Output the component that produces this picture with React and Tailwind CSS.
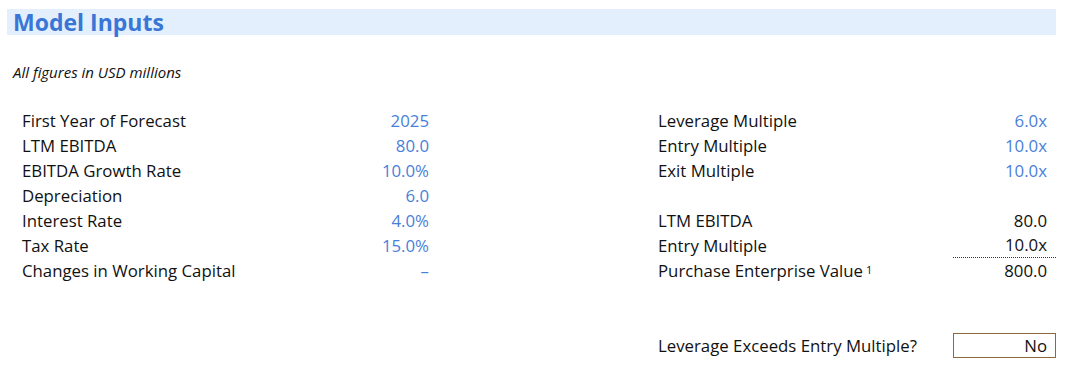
import React from "react";

const LEFT_ROWS = [
  ["First Year of Forecast", "2025"],
  ["LTM EBITDA", "80.0"],
  ["EBITDA Growth Rate", "10.0%"],
  ["Depreciation", "6.0"],
  ["Interest Rate", "4.0%"],
  ["Tax Rate", "15.0%"],
  ["Changes in Working Capital", "–"],
];

const Row = ({ label, value, blue, children, valueClass = "" }) => (
  <div className="flex h-[25px] items-center">
    <div className="flex-1 whitespace-nowrap">
      {label}
      {children}
    </div>
    <div
      className={`w-[103px] h-full flex items-center justify-end pr-[9px] ${
        blue ? "text-[#4a7fd9]" : "text-[#111]"
      } ${valueClass}`}
    >
      {value}
    </div>
  </div>
);

const App = () => {
  return (
    <div
      className="w-[1065px] h-[391px] bg-white text-[#111] overflow-hidden"
      style={{ fontFamily: '"Open Sans", sans-serif' }}
    >
      <div className="mx-[7px] mt-[9px] w-[1049px] h-[26px] bg-[#e3effd] flex items-center pl-[6px]">
        <h1 className="text-[23px] font-bold text-[#3a76d6] leading-none">
          Model Inputs
        </h1>
      </div>

      <p className="mt-[27px] ml-[13px] text-[15px] italic leading-[20px]">
        All figures in USD millions
      </p>

      <div className="mt-[26px] flex text-[16.8px] pl-[22px]">
        {/* left block */}
        <div className="w-[416px]">
          {LEFT_ROWS.map(([label, value]) => (
            <Row key={label} label={label} value={value} blue />
          ))}
        </div>

        {/* right block */}
        <div className="ml-[220px] w-[398px]">
          <Row label="Leverage Multiple" value="6.0x" blue />
          <Row label="Entry Multiple" value="10.0x" blue />
          <Row label="Exit Multiple" value="10.0x" blue />
          <div className="h-[25px]" />
          <Row label="LTM EBITDA" value="80.0" />
          <Row
            label="Entry Multiple"
            value="10.0x"
            valueClass="border-b border-dotted border-[#333]"
          />
          <Row label="Purchase Enterprise Value" value="800.0">
            <sup className="ml-[3px] text-[11px] relative -top-[3px]">1</sup>
          </Row>
          <div className="h-[50px]" />
          <div className="flex h-[25px] items-center">
            <div className="flex-1 whitespace-nowrap">
              Leverage Exceeds Entry Multiple?
            </div>
            <div className="w-[103px] h-full flex items-center justify-end pr-[8px] border border-[#8b6a3e]">
              No
            </div>
          </div>
        </div>
      </div>
    </div>
  );
};

export default App;
